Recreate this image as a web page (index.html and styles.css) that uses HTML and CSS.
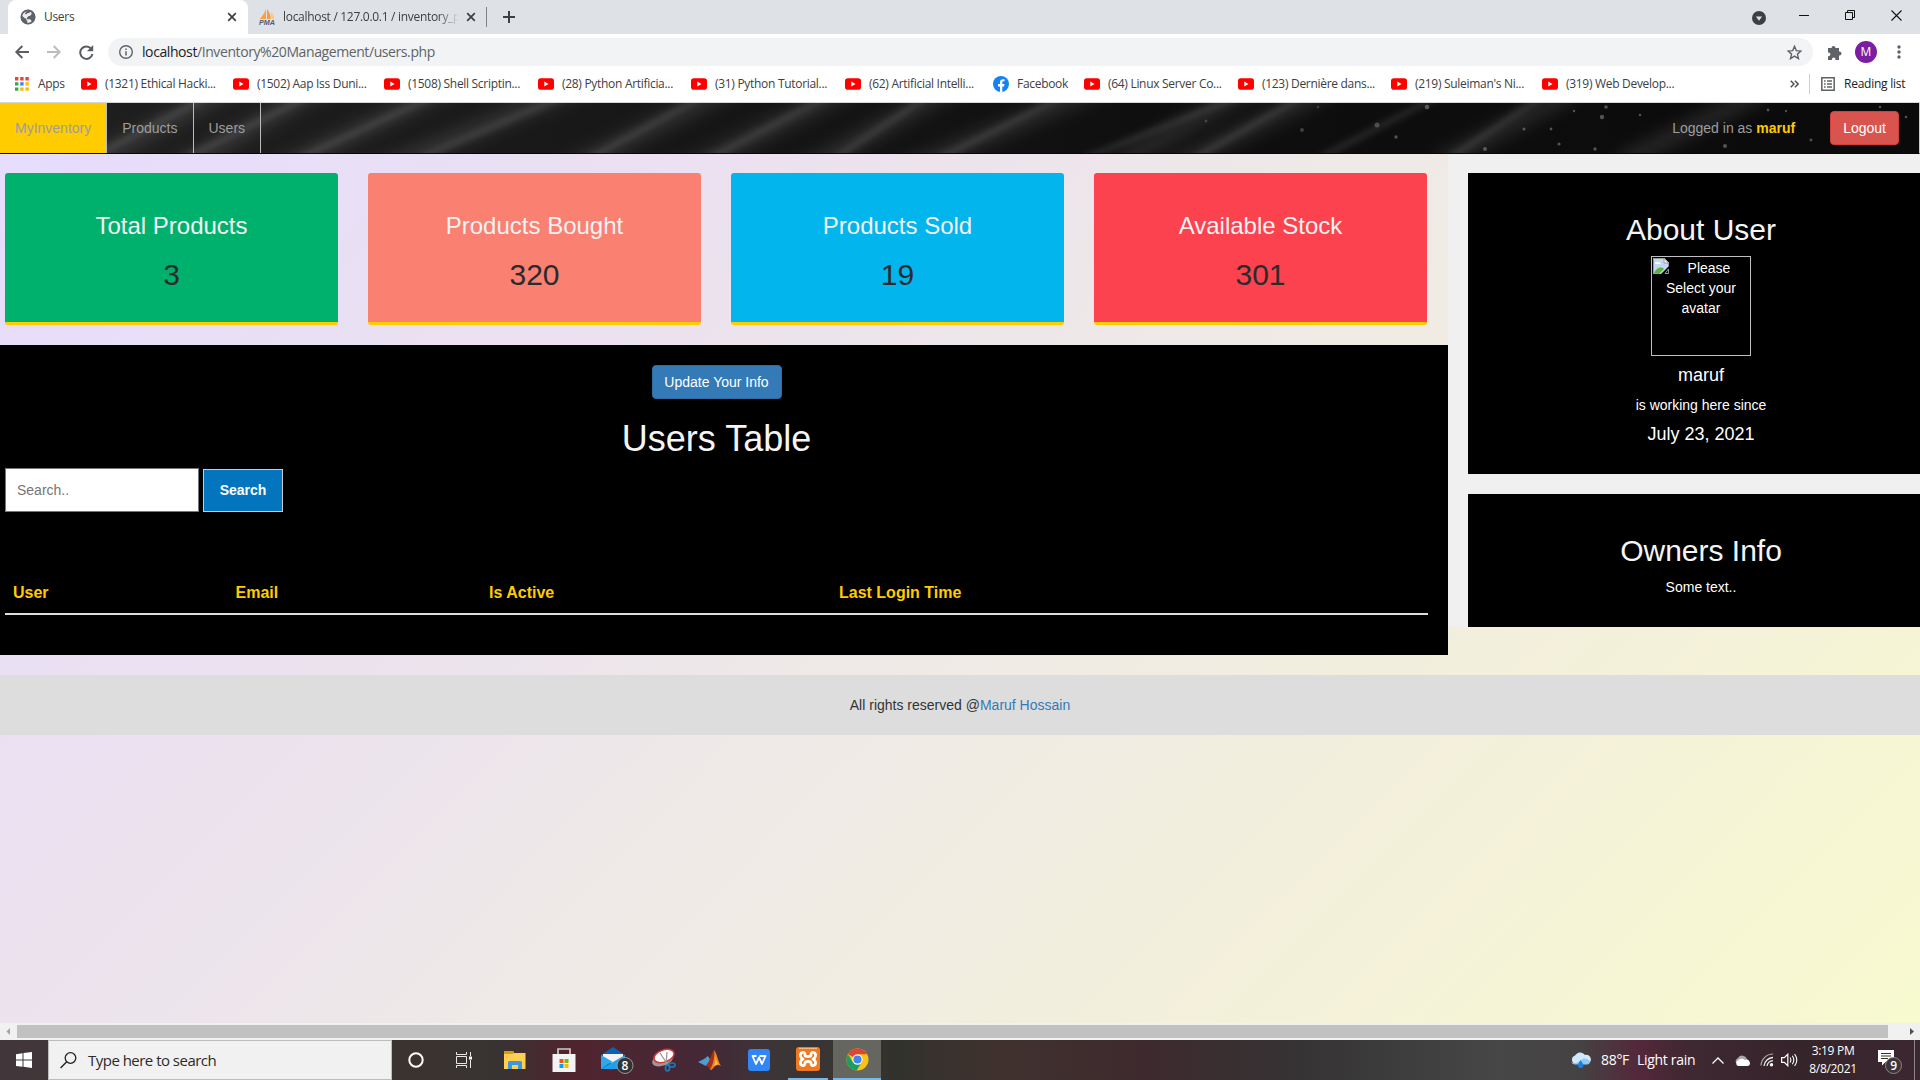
FILE: index.html
```html
<!DOCTYPE html>
<html lang="en">
<head>
<meta charset="utf-8">
<title>Users</title>
<link rel="stylesheet" href="styles.css">
</head>
<body>
<svg class="defs" width="0" height="0" aria-hidden="true">
  <symbol id="yt" viewBox="0 0 16 16"><rect x="0" y="2.3" width="16" height="11.4" rx="2.8" fill="#f00"/><path d="M6.3 5.6v4.8L10.5 8z" fill="#fff"/></symbol>
  <symbol id="close" viewBox="0 0 10 10"><path d="M1.2 1.2l7.6 7.6M8.8 1.2L1.2 8.8" stroke="#3c4043" stroke-width="1.7"/></symbol>
</svg>

<header class="browser">
  <div class="tabstrip">
    <div class="tab tab-active">
      <svg width="16" height="16" viewBox="0 0 16 16"><circle cx="8" cy="8" r="7.2" fill="#5f6368"/><path d="M7.2 2.2c-2.6.3-4.6 2-5.1 4.5l2.6 2.5 1.6.2v1.7l1 1v1.9c1.6.2 3-.3 4.2-1.2l-.3-1.6-1-.9H7V8.2h1.2V7h1.7l1.6-1.7V3.6l-1.4-.9-.8 1.2H7.6L6.4 5.2h-1L5 4.1z" fill="#fff" opacity=".88"/><circle cx="8" cy="8" r="6.8" fill="none" stroke="#5f6368" stroke-width="1.5"/></svg>
      <span class="tab-title">Users</span>
      <svg width="10" height="10"><use href="#close"/></svg>
    </div>
    <div class="tab tab-idle">
      <svg width="17" height="16" viewBox="0 0 17 16"><path d="M7 0v10H0.8C3 7.500 5.800 4 7 0z" fill="#f6a13a"/><path d="M8 0c2 2.500 4 6 3.500 10H8z" fill="#f89c2a"/><path d="M12 3c1.800 2 3 4.500 3.200 7h-3z" fill="#fbc77c"/><text x="0" y="15.600" class="pma" textLength="16" lengthAdjust="spacingAndGlyphs">PMA</text></svg>
      <span class="tab-title fade">localhost / 127.0.0.1 / inventory_p</span>
      <svg width="10" height="10"><use href="#close"/></svg>
    </div>
    <span class="tab-sep"></span>
    <svg class="new-tab" width="12" height="12"><path d="M6 0v12M0 6h12" stroke="#3c4043" stroke-width="2"/></svg>
    <div class="window-controls">
      <svg width="14" height="14"><circle cx="7" cy="7" r="7" fill="#3c4043"/><path d="M3.900 5.400h6.200L7 9.800z" fill="#dee1e6"/></svg>
      <svg width="10" height="10"><path d="M0 5.500h10" stroke="#111"/></svg>
      <svg width="10" height="10"><path d="M.5 2.500h7v7h-7zM2.500 2.500v-2h7v7h-2" fill="none" stroke="#111"/></svg>
      <svg width="11" height="11"><path d="M.5.5l10 10M10.500.5l-10 10" stroke="#111" stroke-width="1.100"/></svg>
    </div>
  </div>

  <div class="toolbar">
    <svg width="14" height="14" viewBox="0 0 14 14"><path d="M14 7H1.500M7.300 1L1.300 7l6 6" fill="none" stroke="#5a5d61" stroke-width="2"/></svg>
    <svg width="14" height="14" viewBox="0 0 14 14"><path d="M0 7h12.500M6.700 1l6 6-6 6" fill="none" stroke="#babcbe" stroke-width="2"/></svg>
    <svg width="15" height="15" viewBox="0 0 15 15"><path d="M12.600 4.200A6.200 6.200 0 1 0 13.500 9" fill="none" stroke="#5a5d61" stroke-width="2"/><path d="M14.200 0v6.300H7.900z" fill="#5a5d61"/></svg>
    <div class="omnibox">
      <svg width="14" height="14" viewBox="0 0 14 14"><circle cx="7" cy="7" r="6.300" fill="none" stroke="#5f6368" stroke-width="1.400"/><path d="M7 6.200v4.300M7 3.400v1.500" stroke="#5f6368" stroke-width="1.500"/></svg>
      <span class="url"><b>localhost</b>/Inventory%20Management/users.php</span>
      <svg width="15" height="15" viewBox="0 0 15 15"><path d="M7.500 1.300l1.800 4.300 4.700.4-3.600 3.100 1.100 4.600-4-2.500-4 2.500 1.100-4.600L1 6l4.700-.4z" fill="none" stroke="#5f6368" stroke-width="1.400"/></svg>
    </div>
    <svg class="puzzle" width="15" height="15" viewBox="0 0 15 15"><path d="M1 3h3.500a2 2 0 0 1 4 0H12v3.600h.5a2 2 0 0 1 0 4H12V15H8.500v-.6a1.800 1.800 0 0 0-3.600 0v.6H1v-3.800h.5a1.900 1.900 0 0 0 0-3.800H1z" fill="#5f6368"/></svg>
    <span class="profile">M</span>
    <svg class="kebab" width="4" height="14"><circle cx="2" cy="2" r="1.700" fill="#5f6368"/><circle cx="2" cy="7" r="1.700" fill="#5f6368"/><circle cx="2" cy="12" r="1.700" fill="#5f6368"/></svg>
  </div>

  <div class="bookmarks">
    <a><svg width="14" height="14"><path d="M0 0h3.400v3.400H0zM5.200 0h3.400v3.400H5.200zM10.400 0h3.400v3.400h-3.400z" fill="#ea4335"/><path d="M0 5.200h3.400v3.400H0zM0 10.400h3.400v3.400H0z" fill="#34a853"/><path d="M5.200 5.200h3.400v3.400H5.200z" fill="#4285f4"/><path d="M10.400 5.200h3.400v3.400h-3.400zM5.200 10.400h3.400v3.400H5.200zM10.400 10.400h3.400v3.400h-3.400z" fill="#fbbc05"/></svg><span class="apps">Apps</span></a>
    <a><svg width="16" height="16"><use href="#yt"/></svg><span>(1321) Ethical Hacki...</span></a>
    <a><svg width="16" height="16"><use href="#yt"/></svg><span>(1502) Aap Iss Duni...</span></a>
    <a><svg width="16" height="16"><use href="#yt"/></svg><span>(1508) Shell Scriptin...</span></a>
    <a><svg width="16" height="16"><use href="#yt"/></svg><span>(28) Python Artificia...</span></a>
    <a><svg width="16" height="16"><use href="#yt"/></svg><span>(31) Python Tutorial...</span></a>
    <a><svg width="16" height="16"><use href="#yt"/></svg><span>(62) Artificial Intelli...</span></a>
    <a><svg width="16" height="16"><circle cx="8" cy="8" r="8" fill="#1183f3"/><path d="M7 16v-5.600H5V8h2V6.300C7 4.300 8.200 3.200 10 3.200l1.500.1v2h-1C9.500 5.300 9.300 5.900 9.300 6.500V8h2.200l-.4 2.400H9.300V16z" fill="#fff"/></svg><span>Facebook</span></a>
    <a><svg width="16" height="16"><use href="#yt"/></svg><span>(64) Linux Server Co...</span></a>
    <a><svg width="16" height="16"><use href="#yt"/></svg><span>(123) Dernière dans...</span></a>
    <a><svg width="16" height="16"><use href="#yt"/></svg><span>(219) Suleiman's Ni...</span></a>
    <a><svg width="16" height="16"><use href="#yt"/></svg><span>(319) Web Develop...</span></a>
    <svg class="more" width="9" height="8"><path d="M.7.7L4 4 .7 7.300M4.900.7L8.200 4 4.900 7.300" fill="none" stroke="#4a4d51" stroke-width="1.400"/></svg>
    <a class="reading"><svg width="14" height="14"><path d="M.8.8h12.400v12.400H.8z" fill="none" stroke="#5f6368" stroke-width="1.500"/><path d="M3 4h1.600M3 7h1.600M3 10h1.600M6 4h5M6 7h5M6 10h5" stroke="#5f6368" stroke-width="1.400"/></svg><span>Reading list</span></a>
  </div>
</header>

<div class="page">
  <nav class="navbar">
    <svg class="nav-texture" width="1920" height="50" viewBox="0 0 1920 50" preserveAspectRatio="none">
      <defs>
        <linearGradient id="night" x1="0" x2="1"><stop offset="0" stop-color="#202020"/><stop offset=".3" stop-color="#181818"/><stop offset=".6" stop-color="#0f0f0f"/><stop offset="1" stop-color="#0a0a0a"/></linearGradient>
        <filter id="soft" x="-5%" y="-100%" width="110%" height="300%"><feGaussianBlur stdDeviation="3"/></filter>
        <filter id="wide" x="-5%" y="-100%" width="110%" height="300%"><feGaussianBlur stdDeviation="7"/></filter>
        <filter id="dot" x="-5%" y="-50%" width="110%" height="200%"><feGaussianBlur stdDeviation=".7"/></filter>
      </defs>
      <rect width="1920" height="50" fill="url(#night)"/>
      <path d="M70 70L240-20M170 70L330-20M270 70L460-20M370 70L590-20M560 70L740-20M680 70L860-20M800 70L960-20M900 70L1110-20M1120 60L1260-20M1170 65L1330-15M1440 60L1570-10M1620 60L1760-10" stroke="#fff" stroke-opacity=".09" stroke-width="20" fill="none" filter="url(#wide)"/>
      <path d="M90 55L205-5M185 55L305-5M300 55L430-5M420 55L560-5M590 55L700-5M710 55L825-5M835 55L925-5M940 55L1060-5M1085 55L1235-5M1195 55L1300-5M1320 55L1440-8M1450 55L1540-5" stroke="#fff" stroke-opacity=".13" stroke-width="5" fill="none" filter="url(#soft)"/>
      <g fill="#bbb" opacity=".4" filter="url(#dot)">
        <circle cx="1206" cy="18" r="1.500" opacity=".6"/><circle cx="1302" cy="27" r="2" opacity=".7"/><circle cx="1318" cy="4" r="1.300" opacity=".6"/><circle cx="1377" cy="22" r="2.500" opacity=".8"/><circle cx="1396" cy="34" r="1.700"/><circle cx="1427" cy="4" r="2.300"/><circle cx="1485" cy="46" r="2"/><circle cx="1524" cy="26" r="1.500"/><circle cx="1551" cy="26" r="1.400"/><circle cx="1559" cy="41" r="1.600"/><circle cx="1595" cy="46" r="1.700"/><circle cx="1606" cy="4" r="1.800"/><circle cx="1602" cy="14" r="2.200"/><circle cx="1574" cy="8" r="1.200"/><circle cx="1640" cy="12" r="1.300"/><circle cx="1725" cy="43" r="2"/><circle cx="1768" cy="7" r="1.400"/><circle cx="1786" cy="8" r="1.200"/><circle cx="1811" cy="37" r="1.400"/><circle cx="1880" cy="4" r="1.300"/><circle cx="1906" cy="14" r="1.300"/>
      </g>
    </svg>
    <a class="brand">MyInventory</a>
    <a>Products</a>
    <a>Users</a>
    <p class="session">Logged in as <b>maruf</b></p>
    <button class="btn btn-danger">Logout</button>
  </nav>

  <div class="columns">
    <main class="left">
      <div class="stats">
        <section class="stat green"><h3>Total Products</h3><h2>3</h2></section>
        <section class="stat salmon"><h3>Products Bought</h3><h2>320</h2></section>
        <section class="stat blue"><h3>Products Sold</h3><h2>19</h2></section>
        <section class="stat red"><h3>Available Stock</h3><h2>301</h2></section>
      </div>
      <section class="panel">
        <button class="btn btn-primary">Update Your Info</button>
        <h1>Users Table</h1>
        <form class="search"><input type="text" placeholder="Search.."><button type="button">Search</button></form>
        <table>
          <thead><tr><th class="c-user">User</th><th class="c-email">Email</th><th class="c-active">Is Active</th><th>Last Login Time</th></tr></thead>
        </table>
      </section>
    </main>
    <aside class="right">
      <section class="card about">
        <h2>About User</h2>
        <div class="avatar"><svg width="16" height="16" viewBox="0 0 16 16"><path d="M0 0h11l5 5v3L8 16H0z" fill="#c3d6f5"/><path d="M2 6c0-2 2.500-3 3.500-1.500C7 4 8 5 7.500 6.300z" fill="#fff"/><path d="M1 15c2-5 7-7 10-4l-4 4z" fill="#5cb43c"/><path d="M11 0v5h5z" fill="#fff"/><path d="M.5 15.500V.5H11l4.500 4.500v3M.5 15.500H7M11 .5V5h4.500M12 15.500h3.500V11z" fill="none" stroke="#9a9a9a"/></svg>Please Select your avatar</div>
        <h4>maruf</h4>
        <p>is working here since</p>
        <h4>July 23, 2021</h4>
      </section>
      <section class="card">
        <h2>Owners Info</h2>
        <p>Some text..</p>
      </section>
    </aside>
  </div>
  <footer>All rights reserved @<a>Maruf Hossain</a></footer>
</div>

<div class="scrollbar">
  <svg width="17" height="17"><path d="M10 5v7L6.500 8.500z" fill="#a3a3a3"/></svg>
  <div class="thumb"></div>
  <svg width="17" height="17"><path d="M7 5v7l4-3.500z" fill="#505050"/></svg>
</div>

<footer class="taskbar">
  <div class="start"><svg width="16" height="16"><path d="M0 2.200L6.500 1.300v6.300H0zM7.500 1.100L16 0v7.600H7.500zM0 8.500h6.500v6.300L0 13.900zM7.500 8.500H16V16l-8.500-1.200z" fill="#fff"/></svg></div>
  <div class="winsearch"><svg width="17" height="17"><circle cx="10.500" cy="6" r="5.300" fill="none" stroke="#222" stroke-width="1.300"/><path d="M6.700 9.800L.6 16" stroke="#222" stroke-width="1.400"/></svg><span>Type here to search</span></div>
  <div class="dock">
    <span><svg width="16" height="16"><circle cx="8" cy="8" r="6.700" fill="none" stroke="#fff" stroke-width="2"/></svg></span>
    <span><svg width="17" height="16"><path d="M.5 0v2.500h10V0M.5 16v-2.500h10V16M.5 4.500h10v7H.5zM14.500 0v4M14.500 8v8" fill="none" stroke="#e8e8e8"/><path d="M13 4.500h3v3h-3z" fill="#fff"/></svg></span>
    <span><svg width="22" height="20" viewBox="0 0 22 20"><path d="M0 1h9l1 2h11.500v16H0z" fill="#fdcf52"/><path d="M0 1h9l1 1.500-1 1.500H0z" fill="#dd9b0b"/><path d="M4 19v-6.500Q4 11 5.500 11h11q1.500 0 1.500 1.500V19h-4v-4H8v4z" fill="#3c97dc"/></svg></span>
    <span><svg width="24" height="24" viewBox="0 0 24 24"><path d="M6 7V1h12v6" fill="none" stroke="#ccc" stroke-width="1.700"/><path d="M.5 6h23v18H.5z" fill="#f3f3f3"/><path d="M7.500 11h4v4h-4z" fill="#f25022"/><path d="M12.500 11h4v4h-4z" fill="#7fba00"/><path d="M7.500 16h4v4h-4z" fill="#00a4ef"/><path d="M12.500 16h4v4h-4z" fill="#ffb900"/></svg></span>
    <span class="mail"><svg width="34" height="28" viewBox="0 0 34 28"><path d="M1 9L13 1l12 8v14H1z" fill="#0c63b4"/><path d="M3 8h20v9L13 18 3 13z" fill="#f4f4f4"/><path d="M1 9l12 7-5 2-7 5z" fill="#2ea8ea"/><path d="M1 23L25 9v14z" fill="#1ea0ea"/><circle cx="25" cy="19.500" r="8" fill="#333" stroke="#999"/><text x="25" y="24" text-anchor="middle" class="badge">8</text></svg></span>
    <span><svg class="up" width="24" height="24" viewBox="0 0 24 24"><ellipse cx="10.500" cy="11.500" rx="11" ry="6" fill="#999" transform="rotate(-20 11 11)"/><ellipse cx="12" cy="8" rx="10.500" ry="6" fill="#fff" stroke="#d8373b" stroke-width="1.500" transform="rotate(-20 12 8)"/><path d="M8 5l8 12M15 4l-1 13" stroke="#999" stroke-width="1.300"/><ellipse cx="20" cy="17" rx="3" ry="2" fill="none" stroke="#1c7ab8" stroke-width="1.700"/><ellipse cx="15.500" cy="20" rx="2" ry="3" fill="none" stroke="#1c7ab8" stroke-width="1.700"/></svg></span>
    <span><svg class="up" width="24" height="22" viewBox="0 0 24 22"><path d="M0 13l6-3 4-3 3 5-5 5z" fill="#4a9fd0"/><path d="M8 16c4-3 5-11 8-15 1 2 0 12-4 20-1-2-2-4-4-5z" fill="#a5301a"/><path d="M16 1c3 3 4 12 7 16-3-2-5-1-7 1-1 1-2 3-4 3 3-6 5-13 4-20z" fill="#f38422"/><path d="M17 5c1 4 2 9 3 10l-4 2c2-4 2-8 1-12z" fill="#fcbf4a"/></svg></span>
    <span><svg class="up" width="22" height="22" viewBox="0 0 22 22"><rect width="22" height="22" rx="3" fill="#2f86f4"/><path d="M8.500 7H4.500L8 15l3-6.500L14 15l3.500-8h-6" fill="none" stroke="#fff" stroke-width="1.800" stroke-linejoin="round"/></svg></span>
    <span class="open"><svg width="24" height="24" viewBox="0 0 24 24"><rect width="24" height="24" rx="3" fill="#ef7820"/><path d="M3 1.500h18" stroke="#fbb67c"/><path d="M6.500 5.500Q4 6 4.500 9 5 11 7 12q-2 1-2.500 3-.5 3 2 3.500Q9 19 9 16q0-1.500 3-1.500t3 1.500q0 3 2.500 2.500t2-3.500Q19 13 17 12q2-1 2.500-3 .5-3-2-3.500T15 8q0 1.500-3 1.500T9 8q0-3-2.500-2.500z" fill="none" stroke="#fff" stroke-width="2.800" stroke-linejoin="round"/></svg></span>
    <span class="open current"><svg width="23" height="23" viewBox="0 0 24 24"><circle cx="12" cy="12" r="11.500" fill="#fbc116"/><path d="M12 12L2 6.200A11.500 11.500 0 0 1 22 6.500H12z" fill="#dd4537"/><path d="M2 6.200A11.500 11.500 0 0 0 11 23.500L16.500 14.500 12 12 7 14.500z" fill="#1a9f5c"/><circle cx="12" cy="12" r="5.400" fill="#fff"/><circle cx="12" cy="12" r="4.300" fill="#4384f3"/></svg></span>
  </div>
  <div class="tray">
    <span><svg width="21" height="16" viewBox="0 0 21 16"><path d="M5 12a4.500 4.500 0 0 1 0-8.500A6 6 0 0 1 15 3a4.600 4.600 0 1 1 1 9z" fill="#cfe8fc"/><path d="M1 10c3 2.500 8 .5 10-2s6-2 9 1c0 3-2 3.500-4 3.500H5c-2 0-3-1-4-2.500z" fill="#93c6f2"/><path d="M10.500 8c2 3 2.800 4 2.800 5.300a2.700 2.700 0 0 1-5.400 0C7.900 12 9 10.500 10.500 8z" fill="#1c7fe0"/></svg></span>
    <span class="temp">88°F</span>
    <span class="rain">Light rain</span>
    <span><svg width="12" height="7"><path d="M.5 6.500L6 1l5.500 5.500" fill="none" stroke="#fff" stroke-width="1.300"/></svg></span>
    <span><svg width="17" height="11" viewBox="0 0 17 11"><path d="M2 8a4 4 0 0 1 2-5 5 5 0 0 1 9 1l2 3z" fill="#a9a9a9"/><path d="M4 11a3 3 0 0 1 0-5.500 5 5 0 0 1 7-.5 3.200 3.200 0 0 1 3 6z" fill="#fff"/></svg></span>
    <span><svg width="14" height="14"><path d="M1 12.500A12 12 0 0 1 13 1" stroke="#aaa" fill="none" stroke-width="1.200"/><path d="M4 13A9.500 9.500 0 0 1 13 4.500M7 13A6.500 6.500 0 0 1 13 7.700" stroke="#eee" fill="none" stroke-width="1.300"/><circle cx="11.500" cy="11.800" r="1.700" fill="#fff"/></svg></span>
    <span><svg width="17" height="14"><path d="M.6 4.600h2.700l3.500-3.400v11.600L3.300 9.400H.6z" fill="none" stroke="#fff" stroke-width="1.200"/><path d="M9 4.500q1.700 2.500 0 5M11.300 2.800q3 4.200 0 8.400M13.600 1q4.400 6 0 12" fill="none" stroke="#fff" stroke-width="1.100"/></svg></span>
    <time>3:19 PM<br>8/8/2021</time>
    <span class="notice"><svg width="26" height="26" viewBox="0 0 26 26"><path d="M1 2h16v12H8.500L5 17.500V14H1z" fill="#fff"/><path d="M4 5.500h10M4 8h10M4 10.500h7" stroke="#332"/><circle cx="16.500" cy="17.500" r="8" fill="#3c3436" stroke="#888"/><text x="16.500" y="22" text-anchor="middle" class="badge">9</text></svg></span>
  </div>
</footer>
</body>
</html>
```
FILE: styles.css
```css
* { box-sizing: border-box; }
html, body { height: 100%; }
body {
  margin: 0;
  display: flex;
  flex-direction: column;
  height: 1080px;
  overflow: hidden;
  font: 14px/20px "Liberation Sans", Arial, sans-serif;
  color: #333;
}
svg { display: block; flex: none; }
.defs { position: absolute; }
h1, h2, h3, h4, p { margin: 0; font-weight: 500; }

/* Browser chrome */
.browser { height: 103px; flex: none; background: #fff; border-bottom: 1px solid #d5d7da; font-family: "Open Sans", "Noto Sans", sans-serif; font-size: 12px; letter-spacing: -.3px; color: #3c4043; }
.tabstrip { height: 34px; display: flex; align-items: center; background: #dee1e6; padding-left: 8px; }
.tab { display: flex; align-items: center; height: 34px; }
.tab-title { flex: 1; white-space: nowrap; overflow: hidden; }
.tab-active { width: 240px; background: #fff; border-radius: 8px 8px 0 0; padding: 0 11px 0 12px; gap: 8px; }
.tab-idle { width: 238px; padding: 0 10px 0 11px; gap: 7px; }
.fade { -webkit-mask-image: linear-gradient(to right, #000 88%, transparent); mask-image: linear-gradient(to right, #000 88%, transparent); }
.pma { font: italic bold 6.500px "Liberation Sans", sans-serif; fill: #55597a; letter-spacing: 0; }
.tab-sep { width: 1px; height: 20px; background: #808387; }
.new-tab { margin-left: 16px; }
.window-controls { margin-left: auto; display: flex; align-items: center; gap: 36px; padding: 0 18px 4px 0; }
.window-controls svg:first-child { margin: 5px -3px 0 0; }
.toolbar { height: 36px; display: flex; align-items: center; padding: 0 19px 0 15px; }
.toolbar > svg + svg { margin-left: 18px; }
.omnibox { flex: 1; height: 28px; margin-left: 14px; padding: 0 11px; display: flex; align-items: center; background: #f1f3f4; border-radius: 14px; gap: 9px; }
.url { flex: 1; font-size: 14px; letter-spacing: -.41px; color: #5f6368; }
.url b { font-weight: 400; color: #202124; }
.puzzle { margin-left: 14px; }
.profile { width: 22px; height: 22px; margin-left: 13px; border-radius: 50%; background: #7b1fa2; color: #fff; text-align: center; line-height: 22px; letter-spacing: 0; }
.kebab { margin-left: 20px; }
.bookmarks { height: 28px; display: grid; align-items: center; padding-left: 15px; grid-template-columns: 66px 152px 151px 154px 153px 154px 148px 91px 154px 153px 151px 248px 19px 1fr; }
.bookmarks a { display: flex; align-items: center; gap: 8px; white-space: nowrap; }
.apps { margin-left: 1px; }
.bookmarks .reading { height: 20px; border-left: 1px solid #ccced1; padding-left: 11px; gap: 9px; letter-spacing: -.25px; color: #202124; }

/* Application page */
.page { flex: none; width: 1934px; height: 920px; background: linear-gradient(135deg, #e6dcfd 0%, #ebe1f0 28%, #efeae6 52%, #f3f0db 74%, #f8facf 100%); }
.navbar { position: relative; z-index: 0; overflow: hidden; width: 1920px; height: 51px; border-bottom: 1px solid #080808; border-right: 1px solid #ccc; display: flex; color: #9d9d9d; }
.nav-texture { position: absolute; top: 0; left: 0; z-index: -1; }
.navbar > a { height: 50px; padding: 15px; border-right: 1px solid #bbb; }
.navbar > .brand { background: #fc0; }
.session { margin: 15px 35px 0 auto; }
.session b { color: #fc0; }
.btn { height: 34px; padding: 6px 12px; border: 1px solid; border-radius: 4px; color: #fff; font: 14px/20px "Liberation Sans", Arial, sans-serif; }
.btn-danger { margin: 8px 20px 0 0; background: #d9534f; border-color: #d43f3a; }
.btn-primary { width: 130px; padding: 6px 0; background: #337ab7; border-color: #2e6da4; }
.columns { display: flex; align-items: flex-start; }
.left { width: 1448px; padding-top: 19px; }
.stats { display: grid; grid-template-columns: repeat(4, 333px); gap: 30px; padding: 0 20px 0 5px; margin-bottom: 20px; }
.stat { height: 152px; padding-top: 40px; text-align: center; border-bottom: 3px solid #fc0; border-radius: 3px; }
.stat h3 { font-size: 24px; line-height: 26.4px; color: #f2f2f2; }
.stat h2 { margin-top: 19px; font-size: 30px; line-height: 33px; color: #292b2c; }
.green { background: #00b16e; }
.salmon { background: #fa8072; }
.blue { background: #02b5ec; }
.red { background: #fd424f; }
.panel { height: 310px; background: #000; padding: 20px 20px 0 5px; display: flex; flex-direction: column; align-items: center; }
.panel h1 { margin: 20px 0 9.4px; font-size: 36px; line-height: 39.6px; color: #f5f5f5; }
.search { align-self: stretch; display: flex; align-items: flex-end; gap: 4px; }
.search input { width: 194px; height: 44px; padding: 10px 11px; border: 1px solid #777; border-radius: 0; font: 14px "Liberation Sans", Arial, sans-serif; }
.search input::placeholder { color: #757575; }
.search button { width: 80px; height: 43px; padding: 0; background: #0275be; color: #fff; border: 1px solid #ccc; font: bold 14px "Liberation Sans", Arial, sans-serif; }
table { margin-top: 60px; width: 1423px; border-collapse: collapse; table-layout: fixed; font-size: 16px; }
th { height: 42px; padding: 2px 8px 0; text-align: left; color: #fc0; border-bottom: 2px solid #ddd; }
.c-user { width: 222.5px; }
.c-email { width: 253.5px; }
.c-active { width: 350px; }
.right { width: 486px; background: #f0f0f0; padding: 19px 0 0 20px; }
.card { height: 133px; background: #000; color: #fff; text-align: center; padding-top: 40px; }
.card h2 { font-size: 30px; line-height: 33px; color: #f5f5f5; margin-bottom: 10px; }
.about { height: 301px; margin-bottom: 20px; }
.avatar { width: 100px; height: 100px; margin: 0 auto 9px; border: 1px solid silver; padding: 1px; line-height: 20px; }
.avatar svg { float: left; }
.about h4 { font-size: 18px; line-height: 20px; }
.about p { margin: 10px 0 9px; }
.page footer { height: 60px; margin-top: 20px; background: #ddd; width: 1920px; padding-top: 20px; text-align: center; }
.page footer a { color: #337ab7; }

/* Horizontal scrollbar */
.scrollbar { height: 17px; flex: none; display: flex; background: #f1f1f1; align-items: center; }
.thumb { width: 1871px; height: 13px; background: #c1c1c1; margin-right: auto; }

/* Windows taskbar */
.taskbar { height: 40px; flex: none; display: flex; color: #fff; font-family: "Open Sans", "Noto Sans", sans-serif; background: linear-gradient(to right, #41373a 0, #3b3330 400px, #383332 500px, #50242f 570px, #4a2633 650px, #432936 710px, #3c3637 780px, #32322d 900px, #40312e 1000px, #3e2a2e 1150px, #353334 1300px, #474747 1500px, #454243 1580px, #54273a 1640px, #3e2831 1690px, #36242b 1800px, #3c2730 1920px); }
.start { width: 48px; display: grid; place-items: center; }
.winsearch { width: 344px; display: flex; align-items: center; background: #f1f1f1; border: 1px solid #bcbcbc; padding-left: 11px; gap: 11px; font-size: 15px; letter-spacing: -.52px; color: #2b2b2b; }
.dock { display: grid; grid-template-columns: 48px 49px 51px 47px 54px 45px 48px 49px 50px 48px; }
.dock > span { display: grid; place-items: center; }
.dock .mail { padding-left: 6px; }
.up { margin-bottom: 1px; }
.dock .open { border-bottom: 2px solid #76b9ed; margin-right: 5px; margin-left: 5px; }
.dock .current { background: #65665f; margin: 0; padding-top: 1px; }
.badge { font: 600 12px "Open Sans", sans-serif; fill: #fff; }
.tray { margin-left: auto; display: grid; align-items: center; grid-template-columns: 31px 36px 75px 22px 26px 21px 31px 42px 65px; margin-right: 1px; font-size: 14px; letter-spacing: -.3px; }
.tray time { font-size: 12px; line-height: 18px; text-align: center; white-space: nowrap; justify-self: center; }
.temp, .rain { white-space: nowrap; }
.notice { align-self: stretch; display: flex; align-items: center; padding: 1px 0 0 23px; border-right: 1px solid #8d8589; margin-right: 4px; }
```
